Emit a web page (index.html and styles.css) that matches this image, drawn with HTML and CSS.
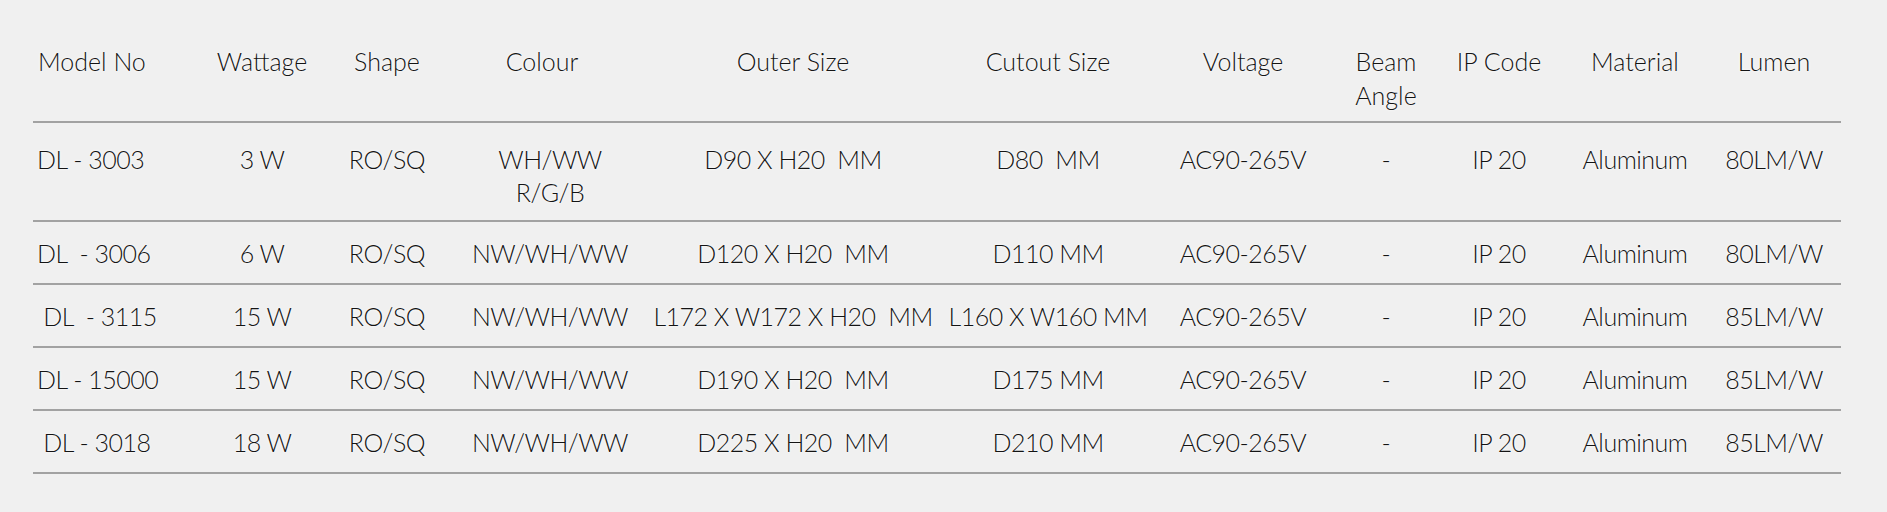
FILE: index.html
```html
<!DOCTYPE html>
<html lang="en">
<head>
<meta charset="utf-8">
<title>Downlight specifications</title>
<link rel="stylesheet" href="styles.css">
</head>
<body>
<div class="spec">
  <div class="row head">
    <div class="cell first">Model No</div>
    <div class="cell">Wattage</div>
    <div class="cell">Shape</div>
    <div class="cell colour">Colour</div>
    <div class="cell">Outer Size</div>
    <div class="cell">Cutout Size</div>
    <div class="cell">Voltage</div>
    <div class="cell">Beam Angle</div>
    <div class="cell">IP Code</div>
    <div class="cell">Material</div>
    <div class="cell">Lumen</div>
  </div>
  <div class="row body tall">
    <div class="cell first">DL - 3003</div>
    <div class="cell">3 W</div>
    <div class="cell">RO/SQ</div>
    <div class="cell">WH/WW<br>R/G/B</div>
    <div class="cell">D90 X H20  MM</div>
    <div class="cell">D80  MM</div>
    <div class="cell">AC90-265V</div>
    <div class="cell">-</div>
    <div class="cell">IP 20</div>
    <div class="cell">Aluminum</div>
    <div class="cell">80LM/W</div>
  </div>
  <div class="row body">
    <div class="cell first">DL  - 3006</div>
    <div class="cell">6 W</div>
    <div class="cell">RO/SQ</div>
    <div class="cell">NW/WH/WW</div>
    <div class="cell">D120 X H20  MM</div>
    <div class="cell">D110 MM</div>
    <div class="cell">AC90-265V</div>
    <div class="cell">-</div>
    <div class="cell">IP 20</div>
    <div class="cell">Aluminum</div>
    <div class="cell">80LM/W</div>
  </div>
  <div class="row body">
    <div class="cell first"> DL  - 3115</div>
    <div class="cell">15 W</div>
    <div class="cell">RO/SQ</div>
    <div class="cell">NW/WH/WW</div>
    <div class="cell">L172 X W172 X H20  MM</div>
    <div class="cell">L160 X W160 MM</div>
    <div class="cell">AC90-265V</div>
    <div class="cell">-</div>
    <div class="cell">IP 20</div>
    <div class="cell">Aluminum</div>
    <div class="cell">85LM/W</div>
  </div>
  <div class="row body">
    <div class="cell first">DL - 15000</div>
    <div class="cell">15 W</div>
    <div class="cell">RO/SQ</div>
    <div class="cell">NW/WH/WW</div>
    <div class="cell">D190 X H20  MM</div>
    <div class="cell">D175 MM</div>
    <div class="cell">AC90-265V</div>
    <div class="cell">-</div>
    <div class="cell">IP 20</div>
    <div class="cell">Aluminum</div>
    <div class="cell">85LM/W</div>
  </div>
  <div class="row body">
    <div class="cell first"> DL - 3018</div>
    <div class="cell">18 W</div>
    <div class="cell">RO/SQ</div>
    <div class="cell">NW/WH/WW</div>
    <div class="cell">D225 X H20  MM</div>
    <div class="cell">D210 MM</div>
    <div class="cell">AC90-265V</div>
    <div class="cell">-</div>
    <div class="cell">IP 20</div>
    <div class="cell">Aluminum</div>
    <div class="cell">85LM/W</div>
  </div>
</div>
</body>
</html>
```
FILE: styles.css
```css
html, body {
  margin: 0;
  padding: 0;
  background: #f0f0f0;
}

body {
  font-family: Lato, "Liberation Sans", sans-serif;
  font-weight: 300;
  font-size: 25px;
  color: #141414;
  text-shadow: 0 0 3px #ffffff, 0 0 1px #ffffff;
}

.spec {
  padding: 0 0 0 33px;
  width: 1808px;
}

.row {
  display: grid;
  grid-template-columns: 178px 102px 148px 178px 308px 202px 188px 98px 128px 144px 134px;
  border-bottom: 2px solid #a2a2a2;
}

.cell {
  text-align: center;
}

.cell.first {
  text-align: left;
  padding-left: 4px;
}

.head .cell {
  line-height: 34px;
  padding: 44px 0 9px;
}

.head .cell.first {
  padding-left: 5px;
}

.head .cell.colour {
  padding-right: 16px;
}

.body .cell {
  line-height: 33px;
  padding: 15px 0 13px;
  white-space: pre-wrap;
  letter-spacing: -0.5px;
}

.body.tall .cell {
  padding: 20px 0 11px;
}

.body .cell.first {
  padding-left: 4px;
}
```
